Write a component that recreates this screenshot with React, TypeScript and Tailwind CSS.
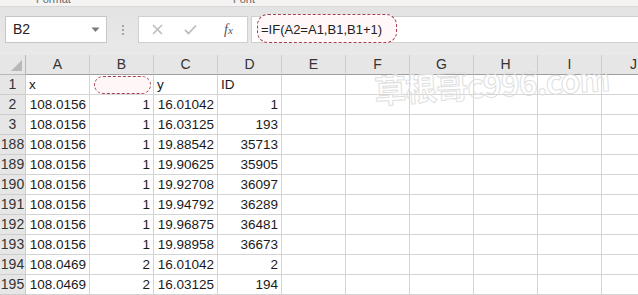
import React from "react";

const cols = ["A", "B", "C", "D", "E", "F", "G", "H", "I", "J"];

type Row = { n: string; a?: string; b?: string; c?: string; d?: string; header?: boolean };

const rows: Row[] = [
  { n: "1", a: "x", b: "", c: "y", d: "ID", header: true },
  { n: "2", a: "108.0156", b: "1", c: "16.01042", d: "1" },
  { n: "3", a: "108.0156", b: "1", c: "16.03125", d: "193" },
  { n: "188", a: "108.0156", b: "1", c: "19.88542", d: "35713" },
  { n: "189", a: "108.0156", b: "1", c: "19.90625", d: "35905" },
  { n: "190", a: "108.0156", b: "1", c: "19.92708", d: "36097" },
  { n: "191", a: "108.0156", b: "1", c: "19.94792", d: "36289" },
  { n: "192", a: "108.0156", b: "1", c: "19.96875", d: "36481" },
  { n: "193", a: "108.0156", b: "1", c: "19.98958", d: "36673" },
  { n: "194", a: "108.0469", b: "2", c: "16.01042", d: "2" },
  { n: "195", a: "108.0469", b: "2", c: "16.03125", d: "194" },
];

function Cell({ v, left, ring }: { v?: string; left?: boolean; ring?: boolean }) {
  return (
    <div
      className={`relative h-[20px] border-r border-b border-[#d4d4d4] bg-white flex items-end pb-[1px] ${
        left ? "justify-start pl-[3px]" : "justify-end pr-[3px]"
      }`}
    >
      {ring && (
        <div className="absolute left-[4px] top-[1px] w-[57px] h-[18px] rounded-[9px] border border-dashed border-[#a2414f] bg-[#fff6f7]" />
      )}
      <span className="relative leading-[16px]">{v}</span>
    </div>
  );
}

export default function App() {
  return (
    <div
      className="w-[638px] h-[295px] overflow-hidden bg-[#e6e6e6] text-[#1a1a1a] text-[13.5px]"
      style={{ fontFamily: '"Liberation Sans", "Noto Sans CJK SC", sans-serif' }}
    >
      {/* ribbon bottom strip */}
      <div className="h-[7px] bg-[#f6f4f3] border-b border-[#d8d8d8] overflow-hidden relative">
        <span className="absolute left-[36px] top-[-9px] text-[11px] text-[#666]">Format</span>
        <span className="absolute left-[233px] top-[-9px] text-[11px] text-[#666]">Font</span>
      </div>
      {/* formula bar */}
      <div className="h-[48px] bg-gradient-to-b from-[#e3e3e3] to-[#e9e9e9] flex items-start pt-[9px] pl-[5px]">
        <div className="w-[102px] h-[27px] bg-white border border-[#c6c6c6] flex items-center justify-between pl-[7px] pr-[6px]">
          <span className="text-[14px] text-[#222]">B2</span>
          <svg width="9" height="6" viewBox="0 0 9 6">
            <path d="M0.5 0.5 L8.5 0.5 L4.5 5 Z" fill="#7a7a7a" />
          </svg>
        </div>
        <div className="w-[31px] h-[27px] flex flex-col items-center justify-center gap-[2px]">
          <div className="w-[2px] h-[2px] bg-[#a5a5a5]" />
          <div className="w-[2px] h-[2px] bg-[#a5a5a5]" />
          <div className="w-[2px] h-[2px] bg-[#a5a5a5]" />
        </div>
        <div className="w-[110px] h-[27px] bg-white border border-[#d0d0d0] flex items-center pl-[13px]">
          <svg width="11" height="11" viewBox="0 0 11 11">
            <path d="M1 1 L10 10 M10 1 L1 10" stroke="#bdbdbd" strokeWidth="1.6" />
          </svg>
          <svg width="13" height="11" viewBox="0 0 13 11" className="ml-[21px]">
            <path d="M1 6 L4.5 9.5 L12 1.5" stroke="#bdbdbd" strokeWidth="1.8" fill="none" />
          </svg>
          <span
            className="ml-[27px] italic text-[14px] text-[#555]"
            style={{ fontFamily: '"Liberation Serif", serif' }}
          >
            f<span className="text-[11px]">x</span>
          </span>
        </div>
        <div className="ml-[3px] flex-1 h-[27px] bg-white border-y border-l border-[#d0d0d0] relative flex items-center pl-[9px]">
          <div className="absolute left-[5px] top-[-3px] w-[140px] h-[29px] rounded-[11px] border border-dashed border-[#a2414f] bg-[#fff7f8]" />
          <span className="relative text-[13px] text-[#222]">=IF(A2=A1,B1,B1+1)</span>
        </div>
      </div>
      {/* grid */}
      <div className="relative grid grid-cols-[26px_repeat(10,64px)]">
        <div className="h-[20px] border-r border-b border-[#b8b8b8] bg-[#e6e6e6] flex items-end justify-end pr-[3px] pb-[3px]">
          <svg width="11" height="11" viewBox="0 0 11 11">
            <path d="M11 0 L11 11 L0 11 Z" fill="#b8b8b8" />
          </svg>
        </div>
        {cols.map((c) => (
          <div
            key={c}
            className="h-[20px] border-r border-b border-r-[#cfcfcf] border-b-[#9e9e9e] bg-[#e6e6e6] flex items-center justify-center text-[14px] text-[#333]"
          >
            {c}
          </div>
        ))}
        {rows.map((r) => (
          <React.Fragment key={r.n}>
            <div className="h-[20px] border-r border-b border-[#cdcdcd] bg-[#e6e6e6] flex items-center justify-center text-[14px] text-[#333]">
              {r.n}
            </div>
            <Cell v={r.a} left={r.header} />
            <Cell v={r.b} left={r.header} ring={r.header} />
            <Cell v={r.c} left={r.header} />
            <Cell v={r.d} left={r.header} />
            <Cell />
            <Cell />
            <Cell />
            <Cell />
            <Cell />
            <Cell />
          </React.Fragment>
        ))}
        <div
          className="absolute left-[374px] top-[10px] text-[32px] leading-[36px] font-bold text-transparent [-webkit-text-stroke:1px_#e0e0e0] -rotate-3 tracking-[-1px] whitespace-nowrap pointer-events-none"
          style={{ fontFamily: '"Noto Sans CJK SC", "Liberation Sans", sans-serif' }}
        >
          草根哥c996.com
        </div>
      </div>
    </div>
  );
}
